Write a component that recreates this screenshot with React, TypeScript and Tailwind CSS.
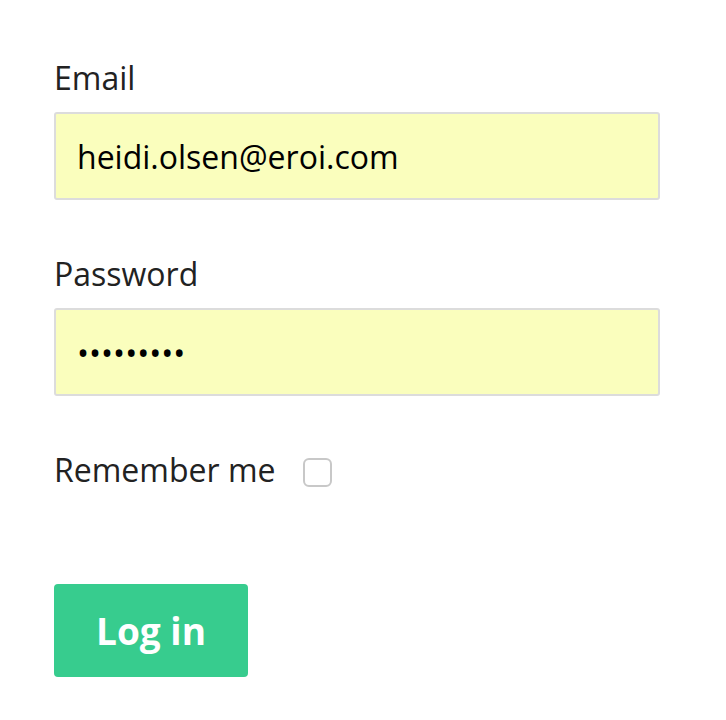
import { useState } from "react";

export default function App() {
    const [email, setEmail] = useState("heidi.olsen@eroi.com");
    const [password, setPassword] = useState("123456789");
    const [remember, setRemember] = useState(false);

    return (
        <div className="min-h-screen bg-white font-['Open_Sans',sans-serif] text-[#222]">
            <form className="flex flex-col pl-[54px] pt-[54px] w-[660px]" onSubmit={(e) => e.preventDefault()}>

                {/* Email */}
                <label htmlFor="email" className="text-[32px] leading-[48px]">Email</label>
                <input
                    id="email"
                    type="email"
                    value={email}
                    onChange={(e) => setEmail(e.target.value)}
                    className="mt-[10px] h-[88px] w-full bg-[#fafebd] border-2 border-[#dcdcdc] rounded-[3px] px-[21px] text-[32px] text-black outline-none"
                />

                {/* Password */}
                <label htmlFor="password" className="mt-[50px] text-[32px] leading-[48px]">Password</label>
                <input
                    id="password"
                    type="password"
                    value={password}
                    onChange={(e) => setPassword(e.target.value)}
                    className="mt-[10px] h-[88px] w-full bg-[#fafebd] border-2 border-[#dcdcdc] rounded-[3px] px-[21px] text-[32px] text-black outline-none"
                />

                {/* Remember me */}
                <div className="mt-[50px] flex items-center gap-[28px]">
                    <label htmlFor="remember" className="text-[32px] leading-[48px]">Remember me</label>
                    <input
                        id="remember"
                        type="checkbox"
                        checked={remember}
                        onChange={(e) => setRemember(e.target.checked)}
                        className="mt-[5px] appearance-none w-[29px] h-[29px] border-2 border-[#c8c8c8] rounded-[6px] bg-white"
                    />
                </div>

                <button
                    type="submit"
                    className="mt-[90px] w-[194px] h-[93px] bg-[#37cc8e] rounded-[4px] text-white font-bold text-[37px]"
                >
                    Log in
                </button>
            </form>
        </div>
    );
}
